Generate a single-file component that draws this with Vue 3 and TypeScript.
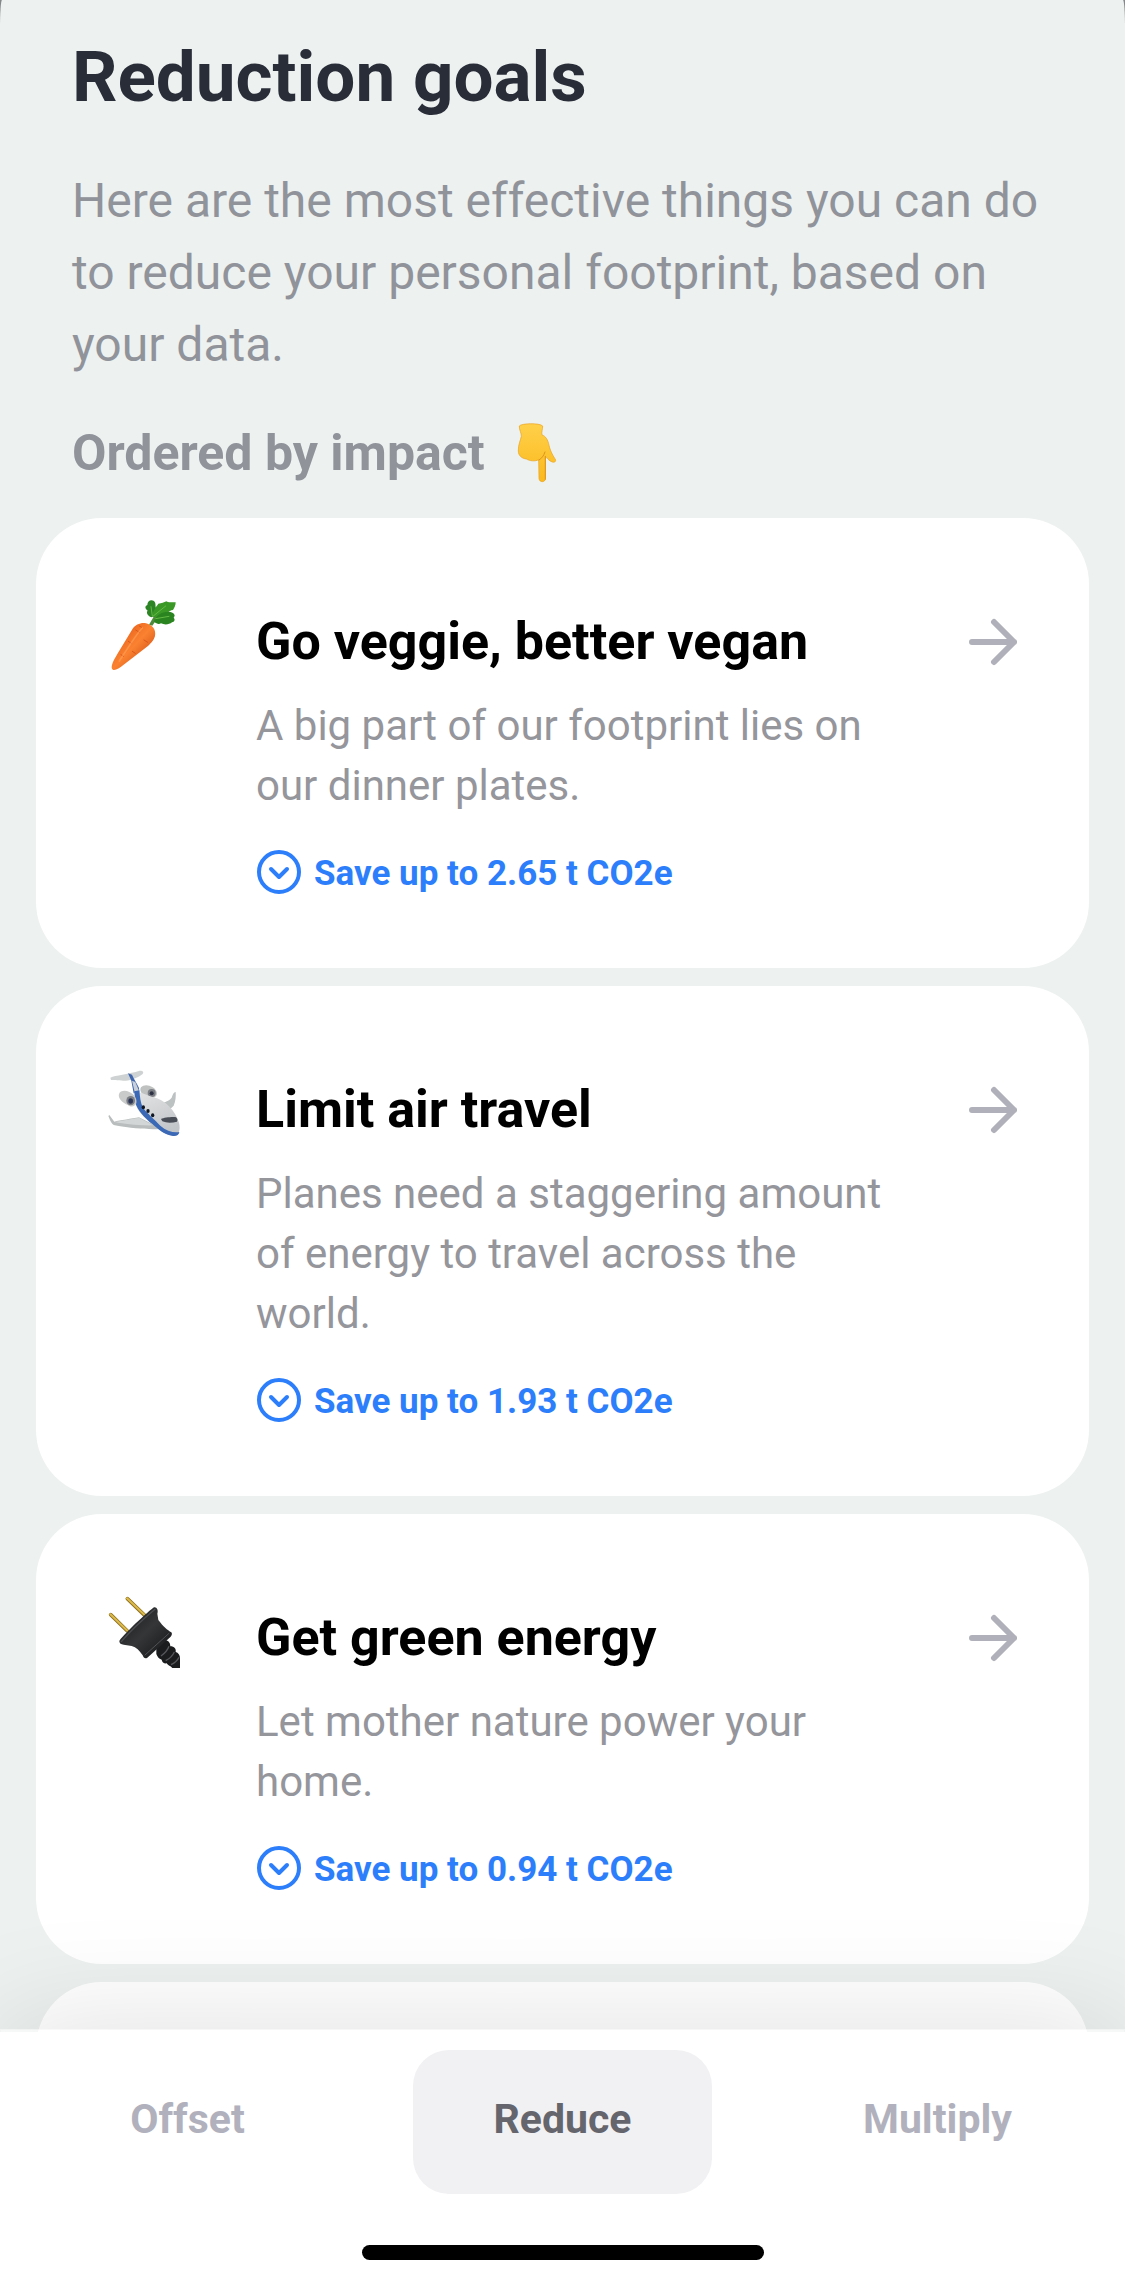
<script setup lang="ts">
interface Goal {
  id: 'carrot' | 'plane' | 'plug'
  title: string
  text: string
  saving: string
}

const goals: Goal[] = [
  { id: 'carrot', title: 'Go veggie, better vegan', text: 'A big part of our footprint lies on our dinner plates.', saving: '2.65' },
  { id: 'plane', title: 'Limit air travel', text: 'Planes need a staggering amount of energy to travel across the world.', saving: '1.93' },
  { id: 'plug', title: 'Get green energy', text: 'Let mother nature power your home.', saving: '0.94' },
]

const tabs = ['Offset', 'Reduce', 'Multiply']
const activeTab = 'Reduce'
</script>

<template>
  <div class="screen">
    <main class="content">
      <header class="intro">
        <h1>Reduction goals</h1>
        <p>Here are the most effective things you can do to reduce your personal footprint, based on your data.</p>
        <h2>
          Ordered by impact
          <svg class="hand" viewBox="54 33 120 180" role="img" aria-label="pointing down">
            <defs>
              <linearGradient id="skin" x1="0" y1="0" x2="0" y2="1">
                <stop offset="0" stop-color="#ffd04a" />
                <stop offset="1" stop-color="#fbb91c" />
              </linearGradient>
            </defs>
            <path d="M61 42C66 34 122 32 131 42C131 52 127 60 129 69C140 72 147 84 150 100C155 121 164 134 169 142C172 149 166 152 160 150C150 147 145 139 139 133L139 200C139 212 121 212 120 200L119 143C108 149 92 147 82 141C67 139 58 130 58 117C57 99 65 84 67 73C68 64 60 53 61 42Z" fill="url(#skin)" stroke="#e8a01c" stroke-width="2" />
            <path d="M120 144C128 139 134 132 138 120M139 133L139 202" fill="none" stroke="#dc931b" stroke-width="3" stroke-linecap="round" />
          </svg>
        </h2>
      </header>

      <ul class="goals">
        <li v-for="goal in goals" :key="goal.id">
          <a class="card" href="#">
            <svg v-if="goal.id === 'carrot'" class="emoji" viewBox="57 60 216 216" aria-hidden="true">
              <defs>
                <linearGradient id="root" x1="0" y1="0" x2="1" y2="1">
                  <stop offset="0.2" stop-color="#e8621c" />
                  <stop offset="0.5" stop-color="#fb8231" />
                  <stop offset="0.8" stop-color="#d65618" />
                </linearGradient>
              </defs>
              <path d="M180 134L194 110L203 102L210 108L190 137Z" fill="#4f8a3c" />
              <path d="M187 112C177 108 170 98 176 92C167 86 167 78 175 75C175 62 186 58 195 63C202 70 198 78 201 84C206 92 200 98 197 108Z" fill="#2c8424" />
              <path d="M191 110C190 92 202 80 208 71C218 71 225 67 232 64C240 70 251 65 260 67C260 77 256 84 252 90C244 90 242 96 234 98C226 107 208 106 198 112Z" fill="#3a9827" />
              <path d="M196 120C206 102 220 95 240 96C250 96 257 101 257 107L254 113C259 118 257 125 249 127C241 134 226 135 216 130C208 134 202 130 196 126Z" fill="#2a8420" />
              <path d="M193 108L230 78M200 116L240 109M190 108L186 80" stroke="#63b944" stroke-width="3" fill="none" stroke-linecap="round" />
              <path d="M69 266C65 257 75 239 85 222L130 148C139 133 157 127 171 130C190 134 202 150 198 168C195 181 183 193 172 202L102 256C90 265 74 276 69 266Z" fill="url(#root)" />
              <path d="M140 150L151 157M165 180L176 187M118 184L127 190M130 214L139 220M96 224L104 229M151 138L158 142" stroke="#d9571a" stroke-width="3" stroke-linecap="round" />
              <path d="M160 144C145 158 117 204 91 243" fill="none" stroke="#ffa45a" stroke-width="5" stroke-linecap="round" opacity="0.6" />
            </svg>

            <svg v-else-if="goal.id === 'plane'" class="emoji" viewBox="57 54 216 216" aria-hidden="true">
              <defs>
                <linearGradient id="hull" x1="0" y1="0" x2="0.5" y2="1">
                  <stop offset="0" stop-color="#e3e4e5" />
                  <stop offset="1" stop-color="#c3c6c9" />
                </linearGradient>
              </defs>
              <path d="M64 83C80 76 115 73 150 63C160 61 166 67 161 72C148 82 128 91 110 92C94 92 73 90 66 90Z" fill="#cfd2d2" />
              <path d="M117 70L129 74C135 88 144 101 150 114L151 128L134 130L127 92Z" fill="#3e65ad" />
              <path d="M129 92L139 96L150 122L137 126Z" fill="#c9d0d8" />
              <path d="M156 112C163 104 178 103 191 112C205 120 208 136 197 142C184 145 172 136 160 132C154 126 152 118 156 112Z" fill="#bfc1c1" />
              <ellipse cx="188" cy="129" rx="12" ry="12" fill="#7b7e84" />
              <circle cx="188" cy="130" r="6" fill="#2c3144" />
              <path d="M224 158C233 153 242 151 248 143C252 132 255 125 260 126C261 139 260 154 254 167L243 178Z" fill="#bcc1c2" />
              <path d="M61 195L76 215C93 211 129 206 150 202L190 222L212 237C179 239 134 236 77 226C70 224 65 216 58 198Z" fill="#b9bdbd" />
              <path d="M78 216L150 203L192 226C145 227 104 222 78 216Z" fill="#d3d6d6" />
              <path d="M137 127C153 124 171 134 193 142C228 150 258 180 270 218C275 239 270 255 256 257C238 257 222 248 205 235C184 219 157 196 146 177C139 164 136 145 137 127Z" fill="url(#hull)" />
              <path d="M136 124L151 121C153 140 154 158 162 173C173 189 197 208 214 227C232 243 254 249 271 246C270 257 260 259 248 257C224 252 207 238 190 222C166 203 145 180 139 158Z" fill="#3c69b6" />
              <path d="M90 132C93 123 107 119 121 126C136 132 145 147 142 160C138 170 127 173 116 165C99 158 86 144 90 132Z" fill="#c9cbca" />
              <ellipse cx="125" cy="152" rx="13" ry="14" fill="#7b7e84" />
              <ellipse cx="125" cy="153" rx="7" ry="8" fill="#2c3758" />
              <ellipse cx="163" cy="172" rx="5" ry="6" fill="#111722" />
              <ellipse cx="177" cy="183" rx="5" ry="6" fill="#111722" />
              <ellipse cx="191" cy="196" rx="5" ry="6" fill="#111722" />
              <path d="M216 207C224 202 247 200 259 201C265 203 267 210 264 215C249 219 232 219 220 214Z" fill="#4a4e57" />
            </svg>

            <svg v-else class="emoji" viewBox="57 48 216 216" aria-hidden="true">
              <defs>
                <linearGradient id="rubber" x1="0" y1="0" x2="1" y2="1">
                  <stop offset="0" stop-color="#17181a" />
                  <stop offset="0.5" stop-color="#343638" />
                  <stop offset="1" stop-color="#111214" />
                </linearGradient>
              </defs>
              <path d="M65 104L115 153M115 56L167 106" stroke="#8e6f1e" stroke-width="11" stroke-linecap="round" />
              <path d="M64 103L115 152M114 55L167 105" stroke="#dcba4b" stroke-width="6" stroke-linecap="round" />
              <path d="M202 196L226 178C238 182 244 188 244 199C256 199 262 207 260 216C268 218 273 226 273 234V264H250C244 257 238 258 233 250C225 251 219 247 218 239C209 237 205 229 202 222Z" fill="#1b1c1e" />
              <path d="M216 228C226 221 236 211 240 199M230 242C242 236 251 227 256 216M246 254C255 250 264 243 270 232" fill="none" stroke="#55575a" stroke-width="4" />
              <path d="M91 184C93 173 184 88 195 82C203 80 209 90 205 101L208 120C223 140 235 150 247 157C250 160 249 166 245 170L175 233C168 238 164 233 161 226C151 211 142 202 128 198L104 194C96 194 91 190 91 184Z" fill="url(#rubber)" />
              <path d="M97 185C120 158 168 113 198 88" fill="none" stroke="#4b4d50" stroke-width="4" stroke-linecap="round" />
              <path d="M168 225L240 160" stroke="#505255" stroke-width="3" stroke-linecap="round" />
            </svg>

            <div class="body">
              <h3>{{ goal.title }}</h3>
              <p>{{ goal.text }}</p>
              <div class="saving">
                <svg viewBox="0 0 46 46" aria-hidden="true">
                  <circle cx="23" cy="22" r="20" />
                  <path d="M15 19L23 27L31 19" />
                </svg>
                <span>Save up to {{ goal.saving }} t CO2e</span>
              </div>
            </div>

            <svg class="arrow" viewBox="0 0 48 48" aria-hidden="true">
              <path d="M3 24H45M25 4L45 24L25 44" />
            </svg>
          </a>
        </li>
        <li class="card upcoming" aria-hidden="true"></li>
      </ul>
    </main>

    <footer class="dock">
      <nav class="tabs">
        <button v-for="tab in tabs" :key="tab" type="button" :class="['tab', { active: tab === activeTab }]">{{ tab }}</button>
      </nav>
      <div class="home-bar"></div>
    </footer>
  </div>
</template>

<style>
body {
  margin: 0;
  background: #85888a;
}
</style>

<style scoped>
.screen {
  display: flex;
  flex-direction: column;
  height: 100vh;
  overflow: hidden;
  border-radius: 2px 2px 0 0 / 28px 28px 0 0;
  background: #edf1f0;
  font-family: Roboto, "Noto Sans", sans-serif;
}

.content {
  flex: 1;
  min-height: 0;
  overflow: hidden;
}

.intro {
  padding: 32px 72px 0;
}

h1,
h2,
h3,
p,
ul {
  margin: 0;
  padding: 0;
}

h1 {
  color: #292d38;
  font-size: 71px;
  font-weight: 700;
  line-height: 90px;
}

.intro p {
  margin-top: 43px;
  color: #91939b;
  font-size: 48px;
  line-height: 72px;
}

h2 {
  display: flex;
  align-items: center;
  gap: 32px;
  margin-top: 36px;
  color: #91939b;
  font-size: 50px;
  font-weight: 700;
  line-height: 72px;
}

.hand {
  width: 40px;
  height: 60px;
}

.goals {
  display: flex;
  flex-direction: column;
  gap: 18px;
  margin-top: 29px;
  padding: 0 36px;
  list-style: none;
}

.card {
  display: flex;
  align-items: flex-start;
  padding: 82px 72px 70px;
  border-radius: 66px;
  background: #fff;
  color: inherit;
  text-decoration: none;
}

.upcoming {
  min-height: 300px;
}

.emoji {
  flex: none;
  width: 72px;
  height: 72px;
  margin-right: 76px;
}

.body {
  flex: 1;
  min-width: 0;
}

h3 {
  color: #000;
  font-size: 52px;
  font-weight: 700;
  line-height: 84px;
}

.body p {
  margin-top: 12px;
  color: #95959c;
  font-size: 42px;
  line-height: 60px;
}

.saving {
  display: flex;
  gap: 12px;
  margin-top: 34px;
  color: #2c7efb;
  font-size: 35px;
  font-weight: 700;
  line-height: 48px;
}

.saving svg {
  flex: none;
  width: 46px;
  height: 46px;
  fill: none;
  stroke: currentColor;
  stroke-width: 4;
  stroke-linecap: round;
  stroke-linejoin: round;
}

.arrow {
  flex: none;
  width: 48px;
  height: 84px;
  margin-left: 72px;
  fill: none;
  stroke: #b0b0bb;
  stroke-width: 6;
  stroke-linecap: round;
  stroke-linejoin: round;
}

.dock {
  position: relative;
  margin-top: -3px;
  padding: 18px 0 24px;
  border-top: 3px solid rgba(255, 255, 255, 0.5);
  background: #fff padding-box;
  box-shadow: 0 0 120px rgba(0, 0, 0, 0.13);
}

.tabs {
  display: grid;
  grid-template-columns: repeat(3, 1fr);
}

.tab {
  height: 144px;
  margin: 0 38px;
  padding: 0 0 6px;
  border: 0;
  border-radius: 36px;
  background: transparent;
  color: #b1b1bd;
  font: inherit;
  font-size: 41px;
  font-weight: 700;
}

.tab.active {
  background: #f1f1f4;
  color: #65656d;
}

.home-bar {
  width: 402px;
  height: 15px;
  margin: 51px auto 0;
  border-radius: 8px;
  background: #000;
}
</style>
